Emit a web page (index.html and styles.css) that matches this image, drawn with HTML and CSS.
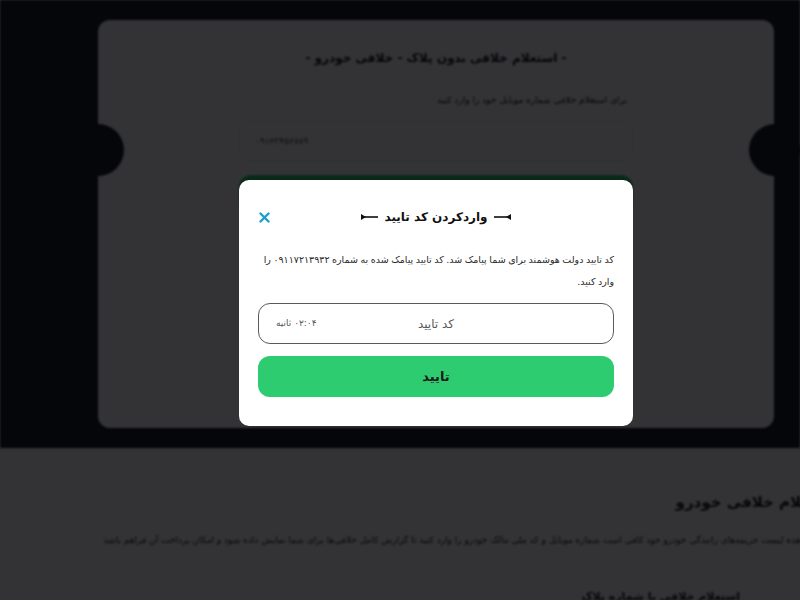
FILE: index.html
```html
<!DOCTYPE html>
<html lang="fa" dir="rtl">
<head>
    <meta charset="UTF-8">
    <meta name="viewport" content="width=device-width, initial-scale=1.0">
    <title>استعلام خلافی خودرو</title>
    <link rel="stylesheet" href="styles.css">
</head>
<body>
    <!-- محتوای صفحه پشت پنجره -->
    <div class="page">
        <section class="hero">
            <div class="ticket">
                <h2 class="ticket-title">- استعلام خلافی بدون پلاک - خلافی خودرو -</h2>
                <p class="ticket-desc">برای استعلام خلافی شماره موبایل خود را وارد کنید</p>
                <div class="ticket-input">۰۹۱۲۳۴۵۶۷۸۹</div>
                <div class="ticket-button"></div>
            </div>
        </section>

        <section class="info">
            <div class="info-inner">
                <h3>استعلام خلافی خودرو</h3>
                <p>برای مشاهده لیست جریمه‌های رانندگی خودرو خود کافی است شماره موبایل و کد ملی مالک خودرو را وارد کنید تا گزارش کامل خلافی‌ها برای شما نمایش داده شود و امکان پرداخت آن فراهم باشد</p>
                <h4>استعلام خلافی با شماره پلاک</h4>
            </div>
        </section>
    </div>

    <!-- پنجره وارد کردن کد تایید -->
    <div class="overlay">
        <div class="modal">
            <div class="modal-header">
                <button type="button" class="close-btn" aria-label="بستن">
                    <svg width="11" height="11" viewBox="0 0 11 11">
                        <path d="M1.5 1.5 L9.5 9.5 M9.5 1.5 L1.5 9.5" stroke="#1b9fcb" stroke-width="2.4" stroke-linecap="round"/>
                    </svg>
                </button>
                <div class="modal-title">
                    <svg class="deco" width="17" height="8" viewBox="0 0 17 8">
                        <rect x="0" y="3.2" width="17" height="1.6" fill="#111"/>
                        <path d="M17 1 L12 4 L17 7 Z" fill="#111"/>
                    </svg>
                    <span>واردکردن کد تایید</span>
                    <svg class="deco" width="17" height="8" viewBox="0 0 17 8">
                        <rect x="0" y="3.2" width="17" height="1.6" fill="#111"/>
                        <path d="M0 1 L5 4 L0 7 Z" fill="#111"/>
                    </svg>
                </div>
            </div>

            <p class="modal-text">کد تایید دولت هوشمند برای شما پیامک شد. کد تایید پیامک شده به شماره ۰۹۱۱۷۲۱۳۹۳۲ را وارد کنید.</p>

            <div class="code-field">
                <input type="text" id="code" placeholder="کد تایید">
                <span class="timer">۰۲:۰۴ ثانیه</span>
            </div>

            <button type="button" class="confirm-btn">تایید</button>
        </div>
    </div>
</body>
</html>
```

FILE: styles.css
```css
/* تنظیمات کلی */
html, body {
    margin: 0;
    padding: 0;
    overflow: hidden;
}
body {
    font-family: "DejaVu Sans", sans-serif;
    color: #1c1c1c;
    background: #fff;
}

/* محتوای صفحه زیر پنجره، کمی محو */
.page {
    filter: blur(1.2px);
}

/* بخش بالایی با کارت بلیطی */
.hero {
    background: #191e27;
    padding: 20px 26px 20px 98px;
}
.ticket {
    position: relative;
    background: #fff;
    border-radius: 12px;
    height: 408px;
    display: flex;
    flex-direction: column;
    align-items: center;
    padding-top: 28px;
    box-sizing: border-box;
}
/* بریدگی‌های دو طرف کارت */
.ticket::before,
.ticket::after {
    content: "";
    position: absolute;
    top: 104px;
    width: 52px;
    height: 52px;
    border-radius: 50%;
    background: #191e27;
}
.ticket::before { left: -26px; }
.ticket::after { right: -27px; }

.ticket-title {
    margin: 0;
    font-size: 12px;
    font-weight: bold;
    line-height: 20px;
}
.ticket-desc {
    width: 394px;
    margin: 24px 0 0;
    font-size: 9px;
    line-height: 16px;
    text-align: right;
    padding-right: 6px;
    box-sizing: border-box;
}
.ticket-input {
    width: 394px;
    height: 40px;
    margin-top: 13px;
    border: 1px solid #c9e9d4;
    border-radius: 12px;
    box-sizing: border-box;
    direction: ltr;
    text-align: left;
    padding-left: 15px;
    line-height: 38px;
    font-size: 9px;
    color: #444;
}
.ticket-button {
    width: 394px;
    height: 40px;
    margin-top: 14px;
    background: #2ecc71;
    border-radius: 12px;
}

/* بخش توضیحات پایین صفحه */
.info {
    background: #fff;
    height: 152px;
    padding-top: 42px;
    box-sizing: border-box;
}
.info-inner {
    margin-right: -36px;
    margin-left: 112px;
    text-align: right;
}
.info h3 {
    margin: 0;
    font-size: 15px;
    font-weight: bold;
    line-height: 24px;
}
.info p {
    margin: 18px 0 0;
    font-size: 9px;
    line-height: 16px;
    white-space: nowrap;
}
.info h4 {
    margin: 42px 0 0;
    font-size: 11px;
    font-weight: bold;
    padding-right: 96px;
}

/* لایه تیره روی صفحه */
.overlay {
    position: fixed;
    inset: 0;
    background: rgba(0, 0, 3, 0.8);
    display: flex;
    justify-content: center;
    align-items: center;
    padding: 6px 0 0 72px;
}

/* پنجره کد تایید */
.modal {
    width: 394px;
    background: #fff;
    border-radius: 10px;
    padding: 24px 19px 29px;
    box-sizing: border-box;
}
.modal-header {
    position: relative;
    height: 26px;
    display: flex;
    justify-content: center;
    align-items: center;
}
.close-btn {
    position: absolute;
    left: 1px;
    top: 8px;
    border: none;
    background: none;
    padding: 0;
    line-height: 0;
    cursor: pointer;
}
.modal-title {
    display: flex;
    align-items: center;
    gap: 6px;
    font-size: 12px;
    font-weight: bold;
    color: #111;
}
.deco {
    display: block;
}

.modal-text {
    margin: 19px 0 0;
    font-size: 9.5px;
    word-spacing: -0.5px;
    line-height: 22px;
    color: #2a2a2a;
    text-align: right;
}

/* فیلد کد و تایمر */
.code-field {
    position: relative;
    margin-top: 10px;
}
.code-field input {
    width: 100%;
    height: 41px;
    box-sizing: border-box;
    border: 1px solid #5a5a5a;
    border-radius: 12px;
    font-family: inherit;
    font-size: 12px;
    text-align: center;
    outline: none;
}
.code-field input::placeholder {
    color: #555;
}
.timer {
    position: absolute;
    left: 18px;
    top: 15px;
    font-size: 9px;
    color: #555;
}

.confirm-btn {
    display: block;
    width: 100%;
    height: 41px;
    margin-top: 12px;
    border: none;
    border-radius: 12px;
    background: #2ecc71;
    font-family: inherit;
    font-size: 13px;
    font-weight: bold;
    color: #1a1a1a;
    cursor: pointer;
}
```
